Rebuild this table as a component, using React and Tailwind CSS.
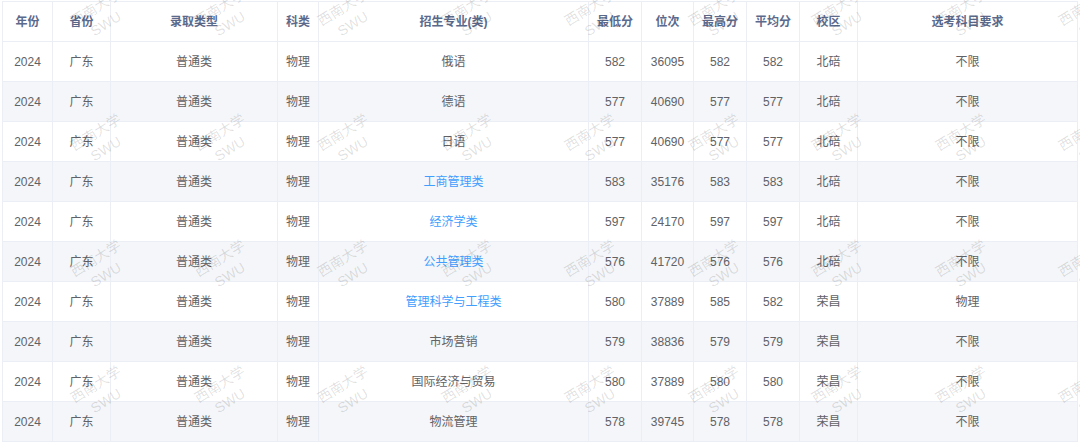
import React from "react";

const headers = ["年份", "省份", "录取类型", "科类", "招生专业(类)", "最低分", "位次", "最高分", "平均分", "校区", "选考科目要求"];

const rows = [
  ["俄语", false, "582", "36095", "582", "582", "北碚", "不限"],
  ["德语", false, "577", "40690", "577", "577", "北碚", "不限"],
  ["日语", false, "577", "40690", "577", "577", "北碚", "不限"],
  ["工商管理类", true, "583", "35176", "583", "583", "北碚", "不限"],
  ["经济学类", true, "597", "24170", "597", "597", "北碚", "不限"],
  ["公共管理类", true, "576", "41720", "576", "576", "北碚", "不限"],
  ["管理科学与工程类", true, "580", "37889", "585", "582", "荣昌", "物理"],
  ["市场营销", false, "579", "38836", "579", "579", "荣昌", "不限"],
  ["国际经济与贸易", false, "580", "37889", "580", "580", "荣昌", "不限"],
  ["物流管理", false, "578", "39745", "578", "578", "荣昌", "不限"],
];

const gridCols = "grid grid-cols-[50px_58px_167px_41px_270px_53px_52px_53px_53px_58px_220px]";

function Watermarks() {
  const xs = [];
  for (let k = 0; k < 9; k++) xs.push(101 + 123.5 * k);
  const ys = [16, 141, 267, 393];
  const items = [];
  ys.forEach((y) =>
    xs.forEach((x) => items.push({ x, y }))
  );
  return (
    <div className="pointer-events-none absolute inset-0 overflow-hidden">
      {items.map((p, i) => (
        <div
          key={i}
          className="absolute flex w-[80px] -translate-x-1/2 -translate-y-1/2 -rotate-[32deg] flex-col items-center text-[14px] leading-[19px] text-[rgba(0,0,0,0.13)]"
          style={{ left: p.x, top: p.y }}
        >
          <span>西南大学</span>
          <span>SWU</span>
        </div>
      ))}
    </div>
  );
}

export default function App() {
  return (
    <div className="relative h-[442px] w-[1080px] overflow-hidden bg-white font-['Liberation_Sans','Noto_Sans_CJK_SC',sans-serif]">
      <div className="ml-[2px] mt-[1px] w-[1076px] border-l border-t border-[#ebeef5]">
        <div className={gridCols}>
          {headers.map((h) => (
            <div
              key={h}
              className="flex h-[40px] items-center justify-center border-b border-r border-[#ebeef5] text-[12px] font-bold text-[#5b6a8c]"
            >
              {h}
            </div>
          ))}
        </div>
        {rows.map((r, i) => {
          const cells = ["2024", "广东", "普通类", "物理", r[0], r[2], r[3], r[4], r[5], r[6], r[7]];
          return (
            <div key={i} className={`${gridCols} ${i % 2 === 1 ? "bg-[#f4f6f9]" : "bg-white"}`}>
              {cells.map((c, j) => (
                <div
                  key={j}
                  className={`flex h-[40px] items-center justify-center border-b border-r border-[#ebeef5] text-[12px] ${
                    j === 4 && r[1] ? "text-[#409eff]" : "text-[#606266]"
                  }`}
                >
                  {c}
                </div>
              ))}
            </div>
          );
        })}
      </div>
      <Watermarks />
    </div>
  );
}
